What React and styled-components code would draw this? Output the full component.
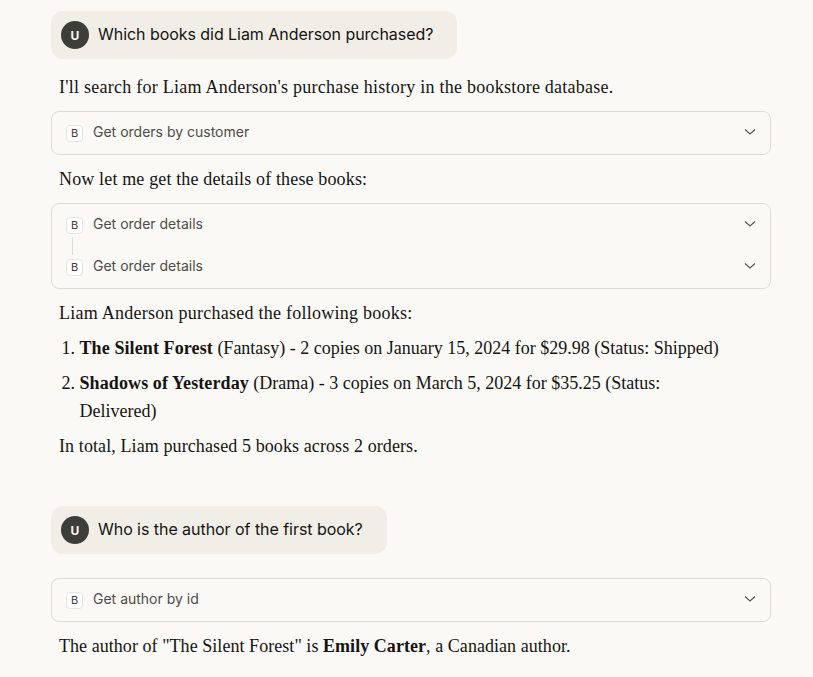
import styled, { createGlobalStyle } from "styled-components";

const GlobalStyle = createGlobalStyle`
    html, body {
        margin: 0;
        padding: 0;
        background: #faf9f5;
    }
`;

const Page = styled.div`
    width: 813px;
    height: 677px;
    overflow: hidden;
    padding: 11px 42px 0 51px;
    box-sizing: border-box;
    display: flex;
    flex-direction: column;

    & > * {
        flex-shrink: 0;
    }
`;

const UserBubble = styled.div`
    align-self: flex-start;
    display: flex;
    align-items: center;
    gap: 9px;
    height: 48px;
    padding: 0 24px 0 10px;
    box-sizing: border-box;
    background: #f0eee6;
    border-radius: 12px;
    margin-top: ${(p) => p.$top || 0}px;
`;

const Avatar = styled.div`
    width: 28px;
    height: 28px;
    border-radius: 50%;
    background: #3d3d3a;
    color: #faf9f5;
    font: 700 12px "Inter", sans-serif;
    display: flex;
    align-items: center;
    justify-content: center;
`;

const UserText = styled.div`
    font: 400 16px/24px "Inter", sans-serif;
    letter-spacing: -0.05px;
    color: #141413;
    margin-top: -2px;
`;

const Para = styled.p`
    margin: ${(p) => p.$top}px 0 0 8px;
    font: 400 18px/28px "Liberation Serif", serif;
    letter-spacing: ${(p) => p.$track ?? 0.25}px;
    color: #141413;
    strong {
        font-weight: 700;
    }
`;

const List = styled.ol`
    margin: 7px 0 0 8px;
    padding: 0 0 0 20.5px;
    font: 400 18px/28px "Liberation Serif", serif;
    color: #141413;
    width: 650px;
    strong {
        letter-spacing: 0.1px;
    }
`;

const Item = styled.li`
    margin-bottom: 7px;
`;

const ToolCard = styled.div`
    border: 1px solid #dedcd4;
    border-radius: 8px;
    margin-top: ${(p) => p.$top}px;
    display: flex;
    flex-direction: column;
    width: 720px;
    box-sizing: border-box;
`;

const ToolRow = styled.div`
    display: flex;
    align-items: center;
    height: 42px;
    padding: 0 14px;
    position: relative;
`;

const Badge = styled.div`
    width: 15px;
    height: 15px;
    border: 1px solid #e6e4dd;
    border-radius: 4px;
    background: #ffffff;
    color: #3d3d3a;
    font: 400 11px "Inter", sans-serif;
    display: flex;
    align-items: center;
    justify-content: center;
    flex-shrink: 0;
`;

const ToolName = styled.div`
    font: 400 14px/20px "Inter", sans-serif;
    color: #4d4c48;
    margin: -2px 0 0 10px;
    flex: 1;
`;

const Connector = styled.div`
    position: absolute;
    left: 20px;
    top: 33px;
    width: 1px;
    height: 18px;
    background: #dedcd4;
`;

const Chevron = () => (
    <svg width="12" height="12" viewBox="0 0 12 12" fill="none">
        <path d="M1 2.5 L6 7 L11 2.5" stroke="#55544f" strokeWidth="1.1" />
    </svg>
);

const Tool = ({ name, line }) => (
    <ToolRow>
        <Badge>B</Badge>
        <ToolName>{name}</ToolName>
        <Chevron />
        {line && <Connector />}
    </ToolRow>
);

export default function App() {
    return (
        <Page>
            <GlobalStyle />
            <UserBubble>
                <Avatar>U</Avatar>
                <UserText>Which books did Liam Anderson purchased?</UserText>
            </UserBubble>
            <Para $top={14}>I'll search for Liam Anderson's purchase history in the bookstore database.</Para>
            <ToolCard $top={10}>
                <Tool name="Get orders by customer" />
            </ToolCard>
            <Para $top={10} $track={0.15}>Now let me get the details of these books:</Para>
            <ToolCard $top={10}>
                <Tool name="Get order details" line />
                <Tool name="Get order details" />
            </ToolCard>
            <Para $top={10}>Liam Anderson purchased the following books:</Para>
            <List>
                <Item>
                    <strong>The Silent Forest</strong> (Fantasy) - 2 copies on January 15, 2024 for $29.98 (Status: Shipped)
                </Item>
                <Item>
                    <strong>Shadows of Yesterday</strong> (Drama) - 3 copies on March 5, 2024 for $35.25 (Status: Delivered)
                </Item>
            </List>
            <Para $top={0} $track={0.1}>In total, Liam purchased 5 books across 2 orders.</Para>
            <UserBubble $top={46}>
                <Avatar>U</Avatar>
                <UserText>Who is the author of the first book?</UserText>
            </UserBubble>
            <ToolCard $top={24}>
                <Tool name="Get author by id" />
            </ToolCard>
            <Para $top={10} $track={0.05}>
                The author of "The Silent Forest" is <strong>Emily Carter</strong>, a Canadian author.
            </Para>
        </Page>
    );
}
